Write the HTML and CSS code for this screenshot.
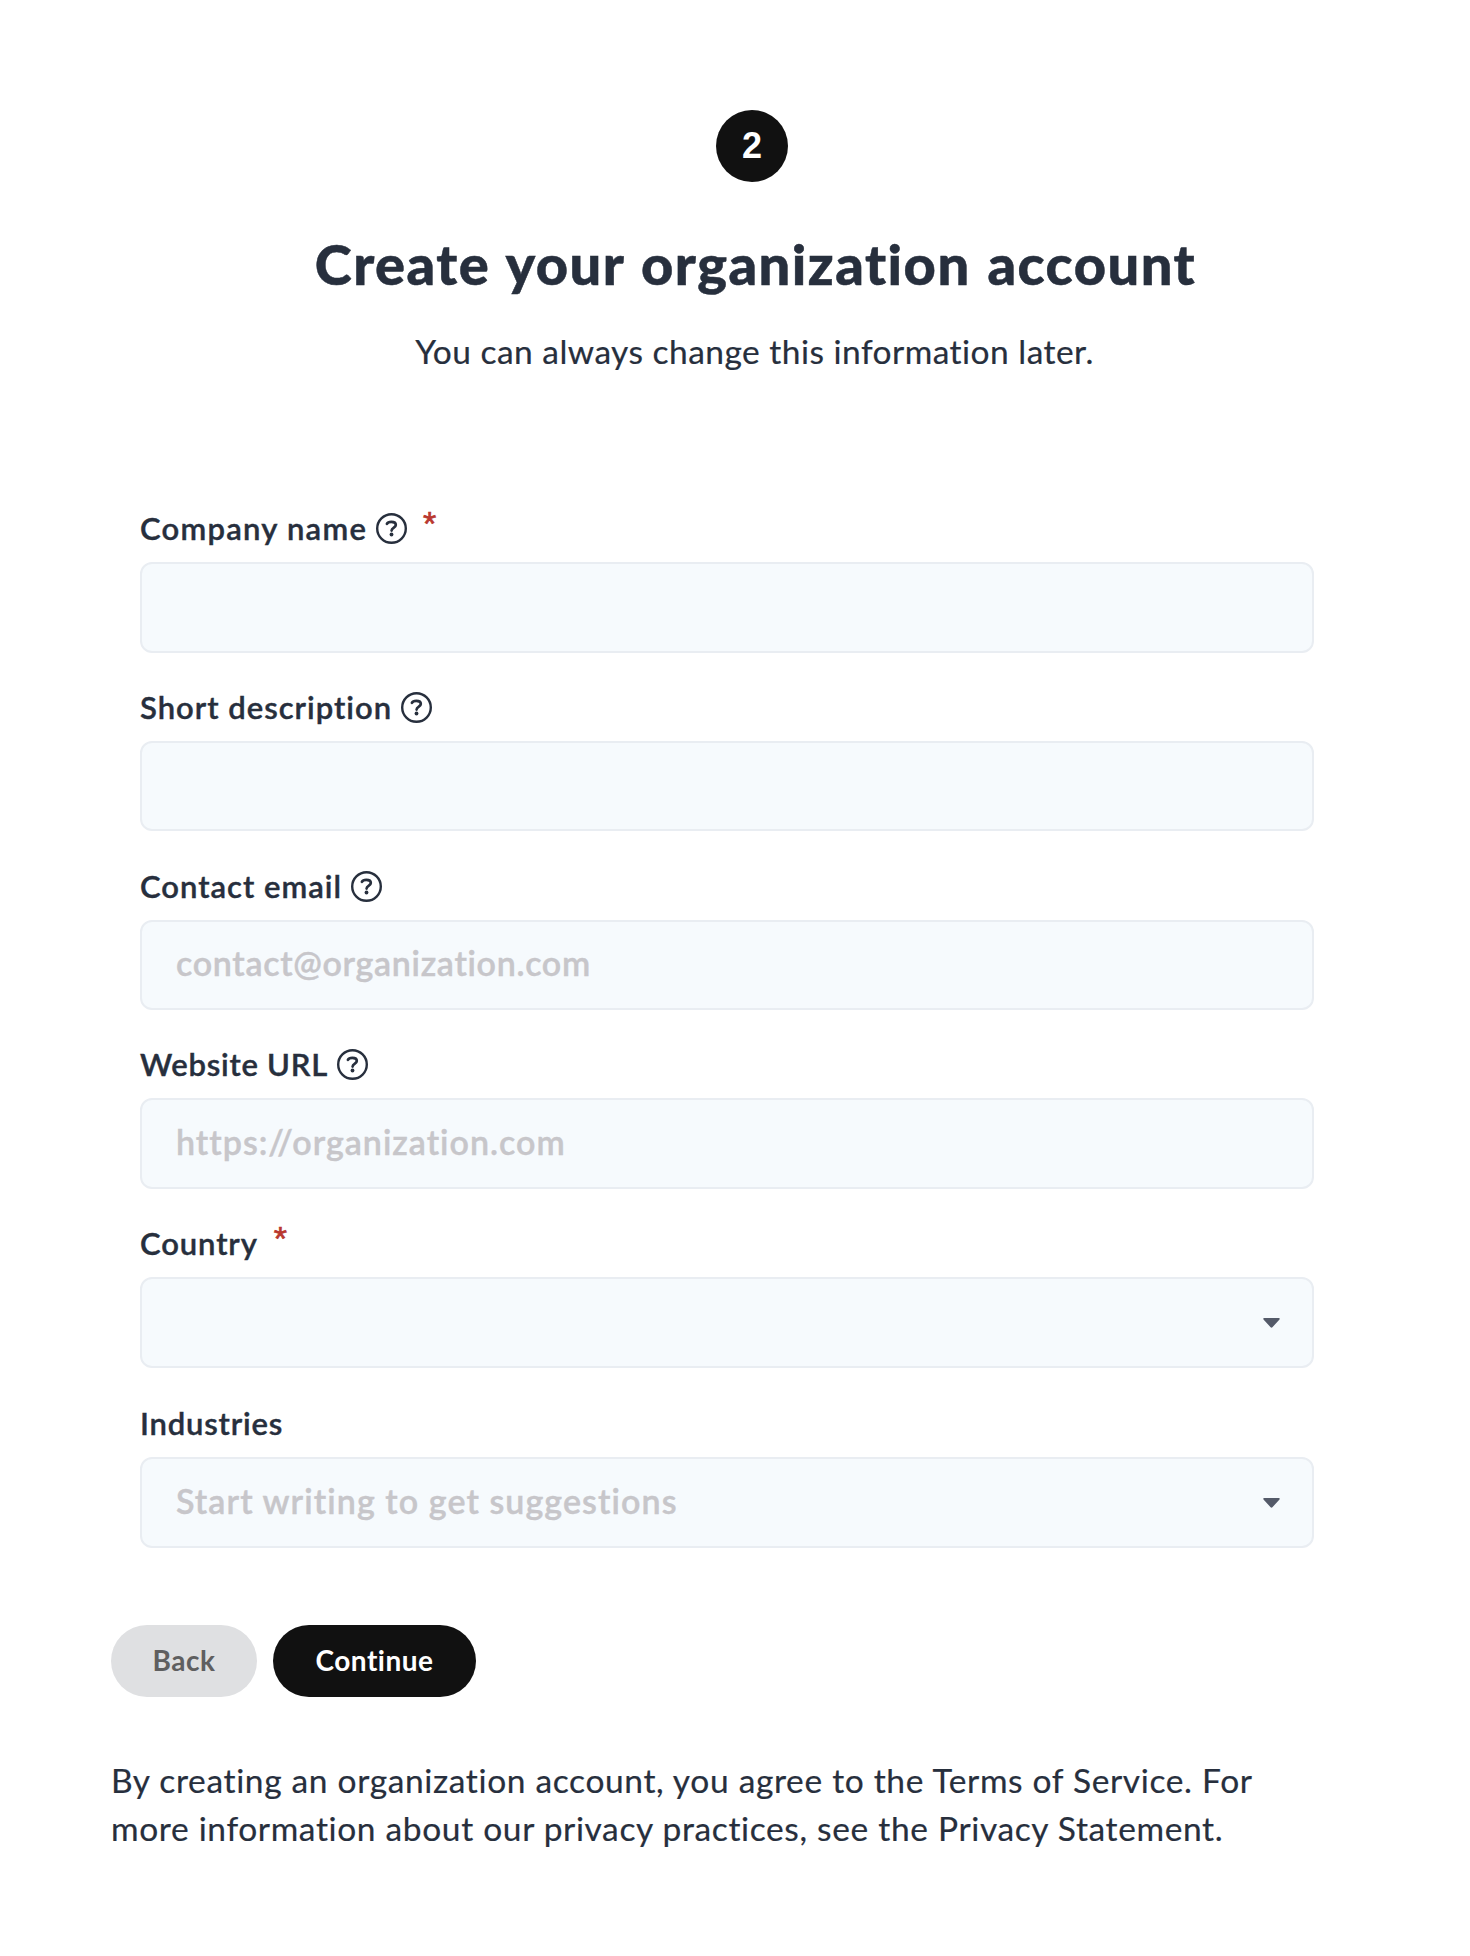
FILE: index.html
```html
<!DOCTYPE html>
<html lang="en">
<head>
<meta charset="utf-8">
<title>Create your organization account</title>
<link rel="stylesheet" href="styles.css">
</head>
<body>
<svg class="sprite" aria-hidden="true">
  <symbol id="help" viewBox="0 0 31 31">
    <circle cx="15.5" cy="15.5" r="14.3" fill="none" stroke="currentColor" stroke-width="2.4"/>
    <path d="M10.9 10.9C11.6 9.5 13.2 8.9 15.3 8.9c2.7 0 4.5 1.1 4.5 3.1 0 2.6-4.2 2.5-4.2 5.6" fill="none" stroke="currentColor" stroke-width="2.7" stroke-linecap="round"/>
    <circle cx="15.5" cy="21.5" r="1.9" fill="currentColor"/>
  </symbol>
  <symbol id="caret" viewBox="0 0 17 10">
    <path d="M1.2 0h14.6c.9 0 1.3.9.7 1.5L9.4 9.3c-.5.6-1.3.6-1.8 0L.5 1.5C-.1.9.3 0 1.2 0z" fill="currentColor"/>
  </symbol>
</svg>
<main class="page">
  <header class="intro">
    <div class="step">2</div>
    <h1 class="title">Create your organization account</h1>
    <p class="subtitle">You can always change this information later.</p>
  </header>
  <form class="form">
    <div class="fields">
      <div class="field field-company">
        <div class="label-row">
          <label class="label" for="company">Company name</label>
          <svg class="help"><use href="#help"/></svg>
          <span class="required">*</span>
        </div>
        <div class="control"><input class="input" id="company" type="text"></div>
      </div>
      <div class="field field-description">
        <div class="label-row">
          <label class="label" for="description">Short description</label>
          <svg class="help"><use href="#help"/></svg>
        </div>
        <div class="control control-short"><input class="input" id="description" type="text"></div>
      </div>
      <div class="field field-email">
        <div class="label-row">
          <label class="label" for="email">Contact email</label>
          <svg class="help"><use href="#help"/></svg>
        </div>
        <div class="control control-short"><input class="input" id="email" type="text" placeholder="contact@organization.com"></div>
      </div>
      <div class="field field-website">
        <div class="label-row">
          <label class="label" for="website">Website URL</label>
          <svg class="help"><use href="#help"/></svg>
        </div>
        <div class="control"><input class="input" id="website" type="text" placeholder="https://organization.com"></div>
      </div>
      <div class="field field-country">
        <div class="label-row">
          <label class="label" for="country">Country</label>
          <span class="required">*</span>
        </div>
        <div class="control"><input class="input" id="country" type="text"><svg class="caret"><use href="#caret"/></svg></div>
      </div>
      <div class="field field-industries">
        <div class="label-row">
          <label class="label" for="industries">Industries</label>
        </div>
        <div class="control"><input class="input" id="industries" type="text" placeholder="Start writing to get suggestions"><svg class="caret"><use href="#caret"/></svg></div>
      </div>
    </div>
    <div class="actions">
      <button class="button button-back" type="button">Back</button>
      <button class="button button-continue" type="button">Continue</button>
    </div>
  </form>
  <p class="legal">By creating an organization account, you agree to the Terms of Service. For<br>more information about our privacy practices, see the Privacy Statement.</p>
</main>
</body>
</html>
```
FILE: styles.css
```css
* { box-sizing: border-box; }

body {
  margin: 0;
  background: #fff;
  color: #272f3d;
  font-family: Lato, "Liberation Sans", sans-serif;
}

.sprite { display: none; }

.page {
  width: 1282px;
  min-height: 1956px;
  margin-left: 111px;
  padding-top: 110px;
}

.intro {
  display: flex;
  flex-direction: column;
  align-items: center;
}

.step {
  width: 72px;
  height: 72px;
  padding-bottom: 1px;
  display: flex;
  align-items: center;
  justify-content: center;
  border-radius: 50%;
  background: #111;
  color: #fff;
  font: 700 36px "Liberation Sans", sans-serif;
}

.title {
  margin: 49px 0 0;
  padding-left: 7px;
  font-size: 56px;
  font-weight: 900;
  line-height: 66px;
  letter-spacing: 1.47px;
  word-spacing: 2px;
  white-space: nowrap;
  -webkit-text-stroke: 0.5px currentColor;
}

.subtitle {
  margin: 30px 0 0;
  padding-left: 5px;
  font-size: 33.5px;
  line-height: 48px;
  letter-spacing: 0.47px;
  -webkit-text-stroke: 0.2px currentColor;
}

.form { margin-top: 131px; }

.fields {
  width: 1174px;
  margin-left: 29px;
  display: grid;
  grid-template-rows: 179px 179px 178px 179px 180px 147px;
}

.label-row {
  height: 56px;
  padding-bottom: 12px;
  display: flex;
  align-items: center;
}

.label {
  font-size: 31px;
  font-weight: 600;
  line-height: 44px;
  letter-spacing: var(--label-tracking);
  white-space: nowrap;
  -webkit-text-stroke: 0.4px currentColor;
}

.field-company { --label-tracking: 1.25px; }
.field-description { --label-tracking: 1px; }
.field-email { --label-tracking: 1px; --tracking: 0.68px; }
.field-website { --label-tracking: 0.75px; --tracking: 1px; }
.field-country { --label-tracking: 0.9px; }
.field-industries { --label-tracking: 0.82px; --tracking: 1.08px; }

.help {
  width: 31px;
  height: 31px;
  margin: 1px 0 0 9px;
}

.required {
  margin: -11px 0 0 16px;
  color: #b9382f;
  font: 400 34px/44px "Liberation Sans", sans-serif;
  -webkit-text-stroke: 0.7px currentColor;
}

.control {
  height: 91px;
  padding-left: 34px;
  padding-right: 32.5px;
  display: flex;
  align-items: center;
  border: 2px solid #e9edf2;
  border-radius: 12px;
  background: #f6fafd;
}

.control-short { height: 90px; }

.input {
  flex: 1;
  min-width: 0;
  height: 87px;
  padding: 0 0 5px;
  border: 0;
  outline: 0;
  background: transparent;
  color: inherit;
  font: 600 34px Lato, "Liberation Sans", sans-serif;
  letter-spacing: var(--tracking);
  -webkit-text-stroke: 0.4px #c7c6ca;
}

.input::placeholder {
  color: #c7c6ca;
  opacity: 1;
}

.caret {
  width: 17px;
  height: 10px;
  color: #545a69;
}

.actions {
  margin-top: 77px;
  display: flex;
  gap: 16px;
}

.button {
  height: 72px;
  padding: 0 0 3px;
  border: 0;
  border-radius: 36px;
  font: 700 28px Lato, "Liberation Sans", sans-serif;
  letter-spacing: 0.5px;
}

.button-back {
  width: 146px;
  background: #dfe0e2;
  color: #5f5f60;
}

.button-continue {
  width: 203px;
  background: #111;
  color: #fff;
}

.legal {
  margin: 59px 0 0;
  font-size: 33.5px;
  line-height: 48px;
  letter-spacing: 0.63px;
  word-spacing: 0.2px;
  white-space: nowrap;
  -webkit-text-stroke: 0.2px currentColor;
}
```
